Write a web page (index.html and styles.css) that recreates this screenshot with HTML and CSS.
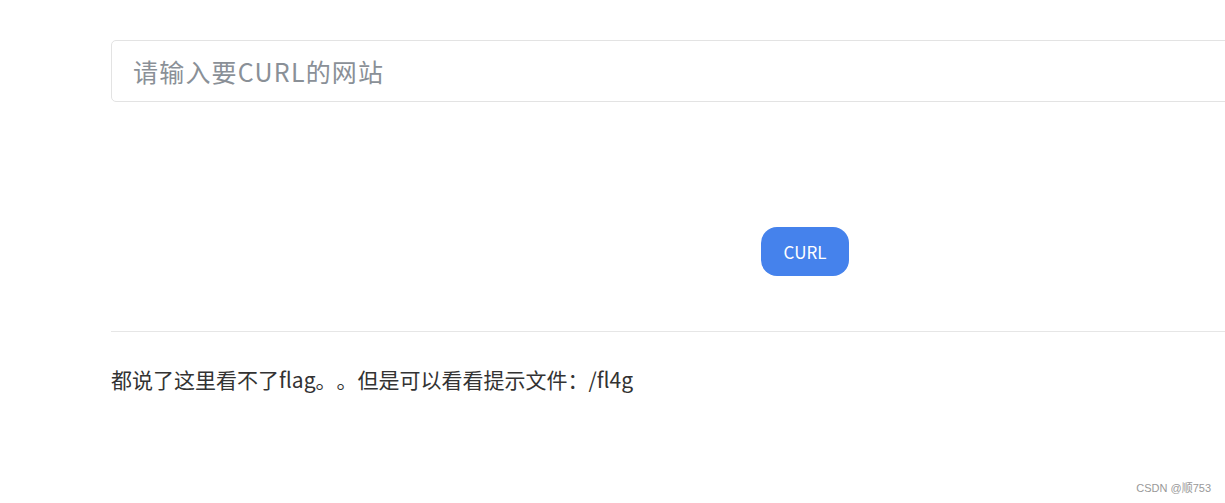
FILE: index.html
```html
<!DOCTYPE html>
<html lang="zh">
  <head>
    <meta charset="utf-8">
    <title>CURL</title>
    <link rel="stylesheet" href="styles.css">
  </head>
  <body>
    <div class="container">
      <form class="curl-form">
        <input class="url-input" type="text" placeholder="请输入要CURL的网站">
        <div class="btn-row">
          <button type="button" class="btn-curl">CURL</button>
        </div>
      </form>
      <hr class="divider">
      <p class="hint">都说了这里看不了flag。。但是可以看看提示文件：/fl4g</p>
    </div>
    <div class="watermark">CSDN @顺753</div>
  </body>
</html>
```

FILE: styles.css
```css
html, body {
  margin: 0;
  padding: 0;
  background: #fff;
  overflow: hidden;
}
body {
  width: 1225px;
  height: 503px;
  font-family: "Noto Sans CJK SC", "Noto Sans", sans-serif;
  color: #333;
  position: relative;
  text-spacing-trim: space-all;
}
.container {
  width: 1388px;
  margin-left: 111px;
  padding-top: 40px;
}
.url-input {
  display: block;
  box-sizing: border-box;
  width: 100%;
  height: 62px;
  padding: 0 21px;
  border: 1px solid #e3e3e3;
  border-radius: 5px;
  font-family: inherit;
  font-size: 25px;
  letter-spacing: 1.2px;
  color: #333;
  outline: none;
}
.url-input::placeholder {
  color: #8a9097;
}
.btn-row {
  display: flex;
  justify-content: center;
  margin-top: 125px;
}
.btn-curl {
  width: 88px;
  height: 49px;
  border: none;
  border-radius: 16px;
  background: #4582ec;
  color: #fff;
  font-family: inherit;
  font-size: 17px;
  cursor: pointer;
}
.divider {
  border: none;
  border-top: 1px solid #e6e6e6;
  margin: 55px 0 0;
}
.hint {
  margin: 33px 0 0;
  font-size: 21px;
  line-height: 28px;
}
.watermark {
  position: absolute;
  right: 14px;
  bottom: 8px;
  font-family: "Liberation Sans", "Noto Sans CJK SC", sans-serif;
  font-size: 11px;
  color: #999;
}
```
